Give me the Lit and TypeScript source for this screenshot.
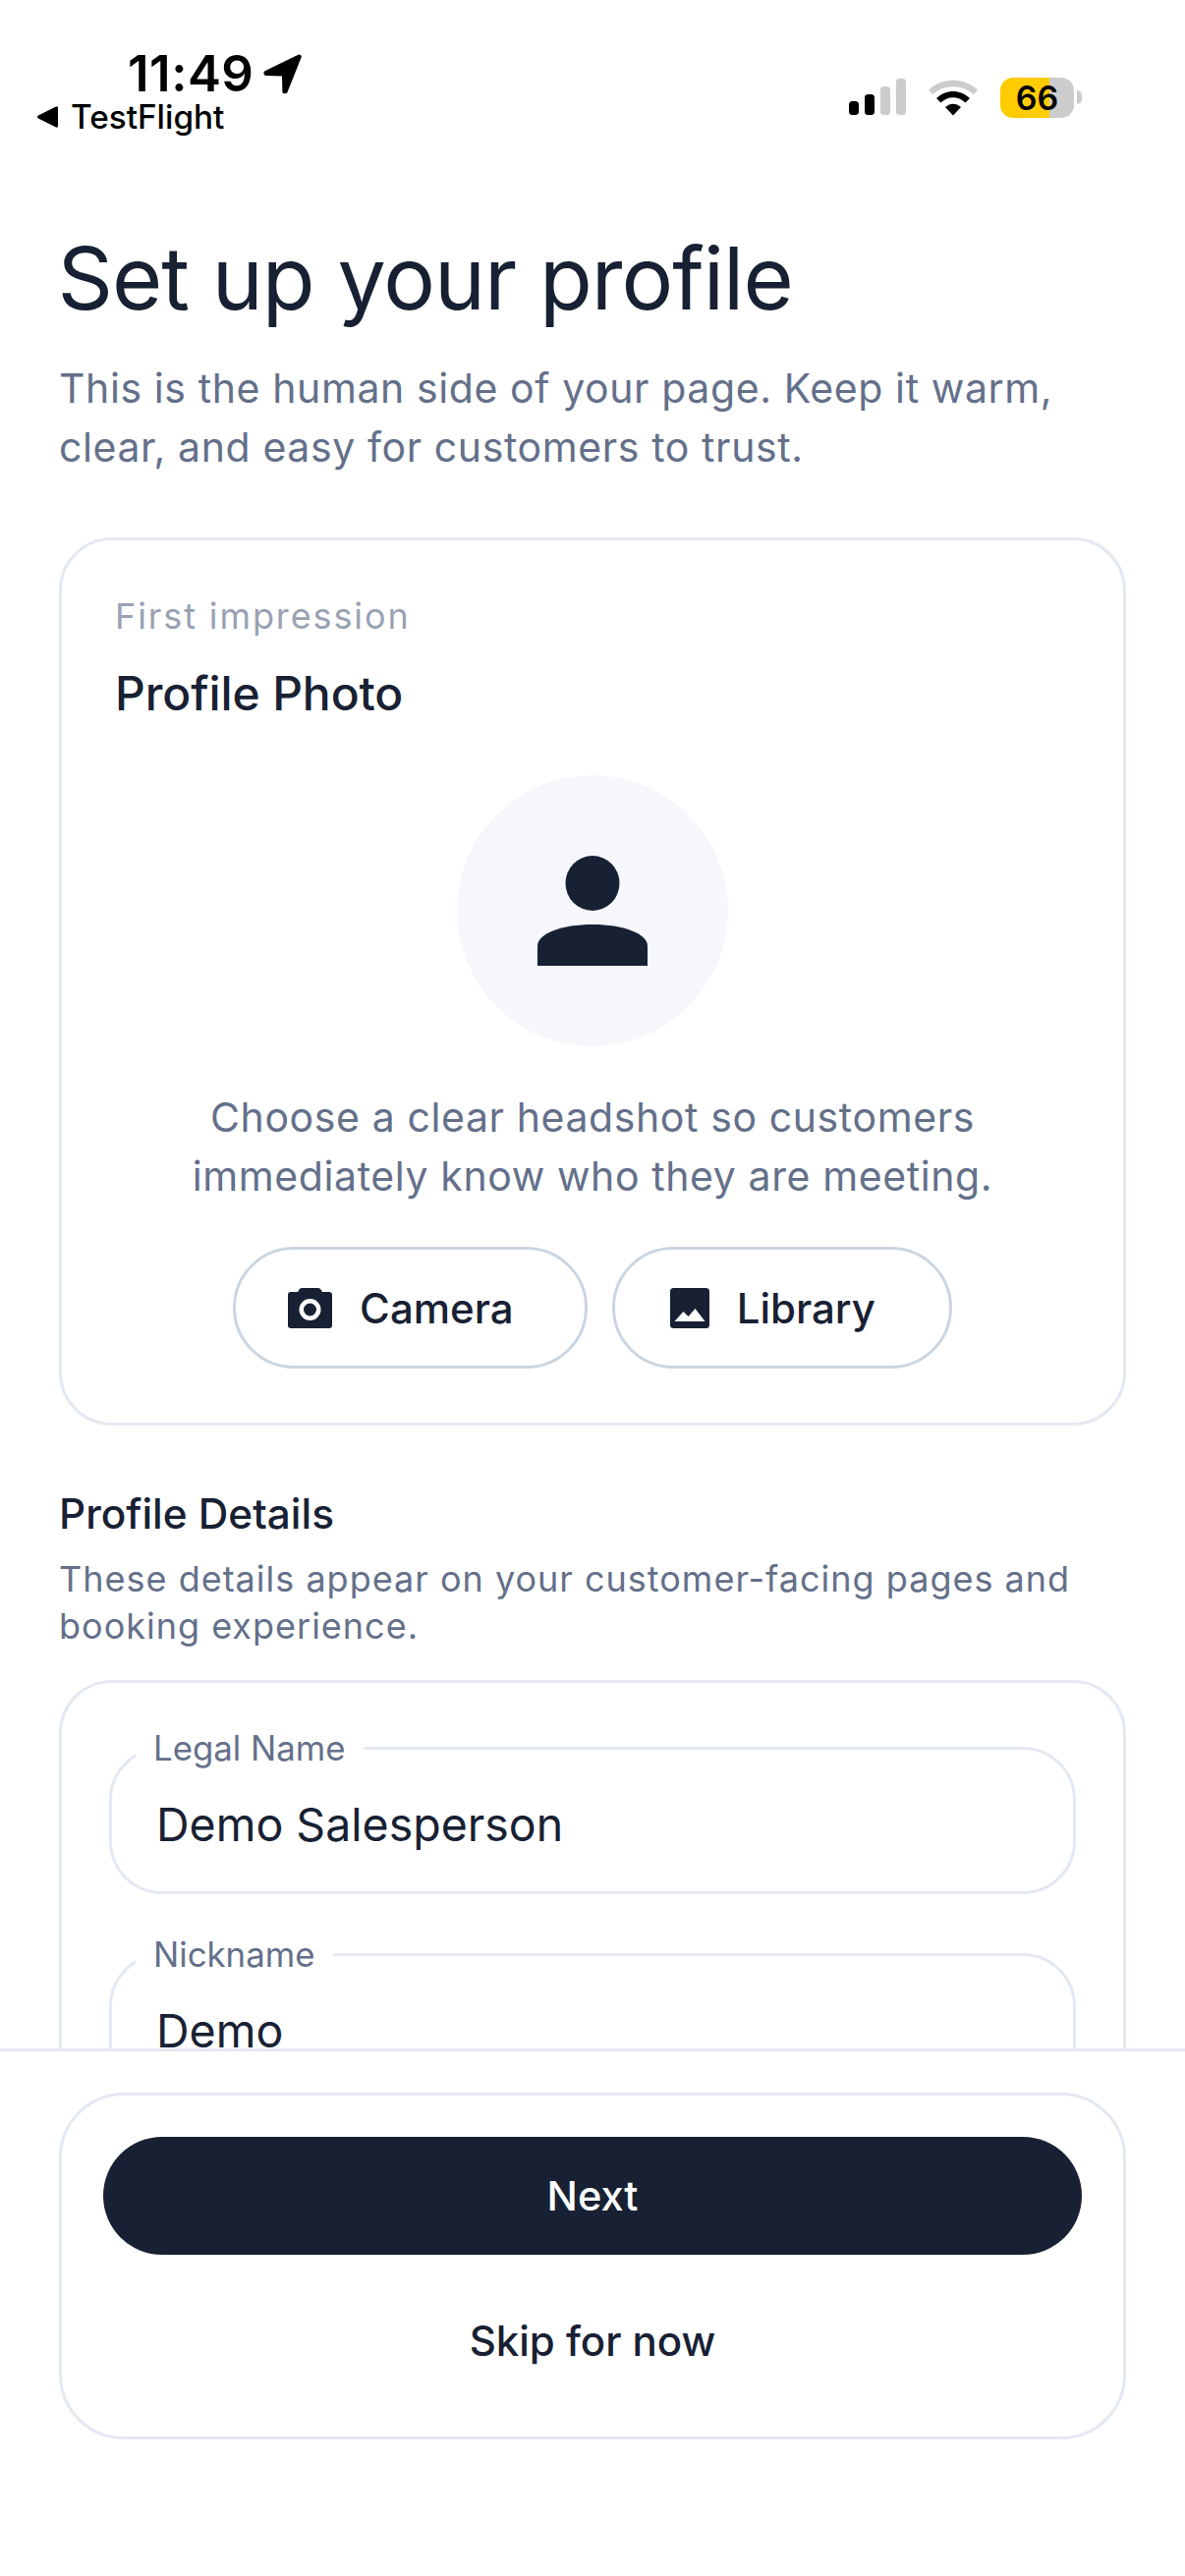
import { LitElement, html, css } from "lit";
import { customElement } from "lit/decorators.js";

@customElement("app-root")
export class AppRoot extends LitElement {
  static styles = css`
    :host {
      display: flex;
      flex-direction: column;
      width: 1206px;
      height: 2622px;
      overflow: hidden;
      background: #fff;
      color: #182133;
      font-family: Inter, "Noto Sans", sans-serif;
    }
    * { box-sizing: border-box; }

    .status {
      flex: none;
      height: 144px;
      display: flex;
      justify-content: space-between;
      padding: 50px 105px 0 38px;
      color: #000;
    }
    .status-left { display: flex; flex-direction: column; }
    .time-row { display: flex; align-items: center; gap: 9px; margin-left: 92px; height: 50px; }
    .time { font-size: 51px; line-height: 50px; font-weight: 600; letter-spacing: 0.5px; }
    .app-row { display: flex; align-items: center; gap: 12px; height: 42px; margin-top: -2px; }
    .app-name { font-size: 33.300px; line-height: 42px; font-weight: 500; }
    .status-right { display: flex; align-items: center; height: 46px; margin-top: 26px; }
    .wifi { margin-left: 22px; }
    .battery {
      width: 75px;
      height: 41px;
      margin-left: 22px;
      border-radius: 13px;
      overflow: hidden;
      background: linear-gradient(90deg, #ffcc00 0 50px, #cccccc 50px);
      display: flex;
      align-items: center;
      justify-content: center;
      font-size: 34px;
      font-weight: 600;
    }
    .nub { width: 5px; height: 14px; margin-left: 3px; background: #ccc; border-radius: 0 7px 7px 0; }

    .scroll { flex: 1; min-height: 0; overflow: hidden; padding: 84px 60px 0; }
    h1 { margin: 0 0 0 -1.500px; font-size: 88px; line-height: 110px; font-weight: 400; letter-spacing: -1px; }
    .lead {
      margin: 27px 0 0;
      font-size: 41px;
      line-height: 60px;
      color: #64708a;
      letter-spacing: 0.6px;
    }

    .card {
      border: 3px solid #e4e8f0;
      border-radius: 54px;
      background: #fff;
    }
    .photo { margin-top: 62px; padding: 53px 54px 55px; }
    .eyebrow { font-size: 36px; line-height: 48px; color: #98a2b3; letter-spacing: 1.900px; }
    .photo-title { margin-top: 25px; font-size: 48px; line-height: 60px; font-weight: 500; letter-spacing: -0.1px; }
    .avatar {
      width: 276px;
      height: 276px;
      margin: 53px auto 0;
      border-radius: 50%;
      background: #f5f7fb;
      display: flex;
      align-items: center;
      justify-content: center;
    }
    .hint {
      margin: 42px 0 0;
      text-align: center;
      font-size: 41px;
      line-height: 60px;
      color: #64708a;
      letter-spacing: 0.6px;
    }
    .actions { display: flex; justify-content: center; gap: 25px; margin-top: 42px; }
    .pill {
      height: 124px;
      display: flex;
      align-items: center;
      gap: 28px;
      padding: 0 72px 0 53px;
      border: 3px solid #cbd5e1;
      border-radius: 62px;
      font-size: 42px;
      font-weight: 500;
    }
    .pill.library { padding: 0 75px 0 56px; }

    .section-title { margin-top: 60px; font-size: 42.300px; line-height: 60px; font-weight: 500; }
    .section-desc {
      margin: 12px 0 0;
      font-size: 36px;
      line-height: 48px;
      color: #64708a;
      letter-spacing: 1px;
    }
    .details { margin-top: 31px; padding: 43px 48px; }
    fieldset {
      margin: 0 0 38px;
      padding: 0 0 0 45px;
      height: 172px;
      border: 3px solid #e4e8f0;
      border-radius: 54px;
    }
    legend { margin-left: -21px; padding: 0 18px; font-size: 34.800px; line-height: 46px; color: #64708a; }
    .value { font-size: 46.500px; line-height: 60px; margin-top: 25px; }

    .footer { flex: none; border-top: 3px solid #e4e8f0; padding: 42px 60px 0; height: 537px; background: #fff; }
    .footer-card { padding: 42px 42px 0; height: 353px; border-radius: 66px; }
    .next {
      height: 120px;
      border-radius: 60px;
      background: #182133;
      color: #fff;
      display: flex;
      align-items: center;
      justify-content: center;
      font-size: 41.500px;
      font-weight: 500;
    }
    .skip { margin-top: 58px; text-align: center; font-size: 42px; line-height: 60px; font-weight: 500; }
  `;

  render() {
    return html`
      <div class="status">
        <div class="status-left">
          <div class="time-row">
            <span class="time">11:49</span>
            <svg width="40" height="40" viewBox="0 0 40 40">
              <path d="M37 0.500 3 17a2.600 2.600 0 0 0 1 5l16 .4.4 15.800a2.600 2.600 0 0 0 5 .8L39.600 3.500A2.300 2.300 0 0 0 37 .5z" fill="#000" />
            </svg>
          </div>
          <div class="app-row">
            <svg width="22" height="22" viewBox="0 0 22 22"><path d="M1 9.500 19 .5a1.500 1.500 0 0 1 2 1.400v18.200a1.500 1.500 0 0 1-2 1.400L1 12.500a1.700 1.700 0 0 1 0-3z" fill="#000" /></svg>
            <span class="app-name">TestFlight</span>
          </div>
        </div>
        <div class="status-right">
          <svg width="58" height="38" viewBox="0 0 58 38">
            <rect x="0" y="23" width="10" height="14" rx="3.500" fill="#000" />
            <rect x="16" y="16" width="10" height="21" rx="3.500" fill="#000" />
            <rect x="32" y="8" width="10" height="29" rx="3.500" fill="#ccc" />
            <rect x="48" y="0" width="10" height="37" rx="3.500" fill="#ccc" />
          </svg>
          <svg class="wifi" width="52" height="38" viewBox="0 0 52 38">
            <path d="M1 11.500C15 -1.500 37 -1.500 51 11.500l-4 4.500C35 5.500 17 5.500 5 16z" fill="#ccc" />
            <path d="M9 20C19 10.500 33 10.500 43 20l-4.500 4.500C31 17.500 21 17.500 13.500 24.500z" fill="#000" />
            <path d="M18 29c5-4.500 11-4.500 16 0l-8 8.500z" fill="#000" />
          </svg>
          <div class="battery">66</div>
          <div class="nub"></div>
        </div>
      </div>

      <div class="scroll">
        <h1>Set up your profile</h1>
        <p class="lead">This is the human side of your page. Keep it warm,<br />clear, and easy for customers to trust.</p>

        <div class="card photo">
          <div class="eyebrow">First impression</div>
          <div class="photo-title">Profile Photo</div>
          <div class="avatar">
            <svg width="112" height="112" viewBox="0 0 112 112">
              <ellipse cx="56" cy="28" rx="27.500" ry="28" fill="#182133" />
              <path d="M0 112V92C0 79 25 70 56 70s56 9 56 22v20z" fill="#182133" />
            </svg>
          </div>
          <p class="hint">Choose a clear headshot so customers<br />immediately know who they are meeting.</p>
          <div class="actions">
            <div class="pill">
              <svg width="45" height="41" viewBox="0 0 45 41">
                <path fill-rule="evenodd" fill="#182133" d="M10 4 11.500 1.500A3 3 0 0 1 14 0h17a3 3 0 0 1 2.500 1.500L35 4h7a3 3 0 0 1 3 3v31a3 3 0 0 1-3 3H3a3 3 0 0 1-3-3V7a3 3 0 0 1 3-3zM22.500 11a11 11 0 1 0 0 22 11 11 0 0 0 0-22zM22.500 15.500a6.500 6.500 0 1 1 0 13 6.500 6.500 0 0 1 0-13z" />
              </svg>
              Camera
            </div>
            <div class="pill library">
              <svg width="40" height="41" viewBox="0 0 40 41">
                <path fill-rule="evenodd" fill="#182133" d="M3.500 0h33A3.500 3.500 0 0 1 40 3.500v34a3.500 3.500 0 0 1-3.500 3.500h-33A3.500 3.500 0 0 1 0 37.500v-34A3.500 3.500 0 0 1 3.500 0zM4.500 34h31L25.500 21 18.500 29 13.500 24z" />
              </svg>
              Library
            </div>
          </div>
        </div>

        <div class="section-title">Profile Details</div>
        <p class="section-desc">These details appear on your customer-facing pages and<br />booking experience.</p>

        <div class="card details">
          <fieldset>
            <legend>Legal Name</legend>
            <div class="value">Demo Salesperson</div>
          </fieldset>
          <fieldset>
            <legend>Nickname</legend>
            <div class="value">Demo</div>
          </fieldset>
        </div>
      </div>

      <div class="footer">
        <div class="card footer-card">
          <div class="next">Next</div>
          <div class="skip">Skip for now</div>
        </div>
      </div>
    `;
  }
}
